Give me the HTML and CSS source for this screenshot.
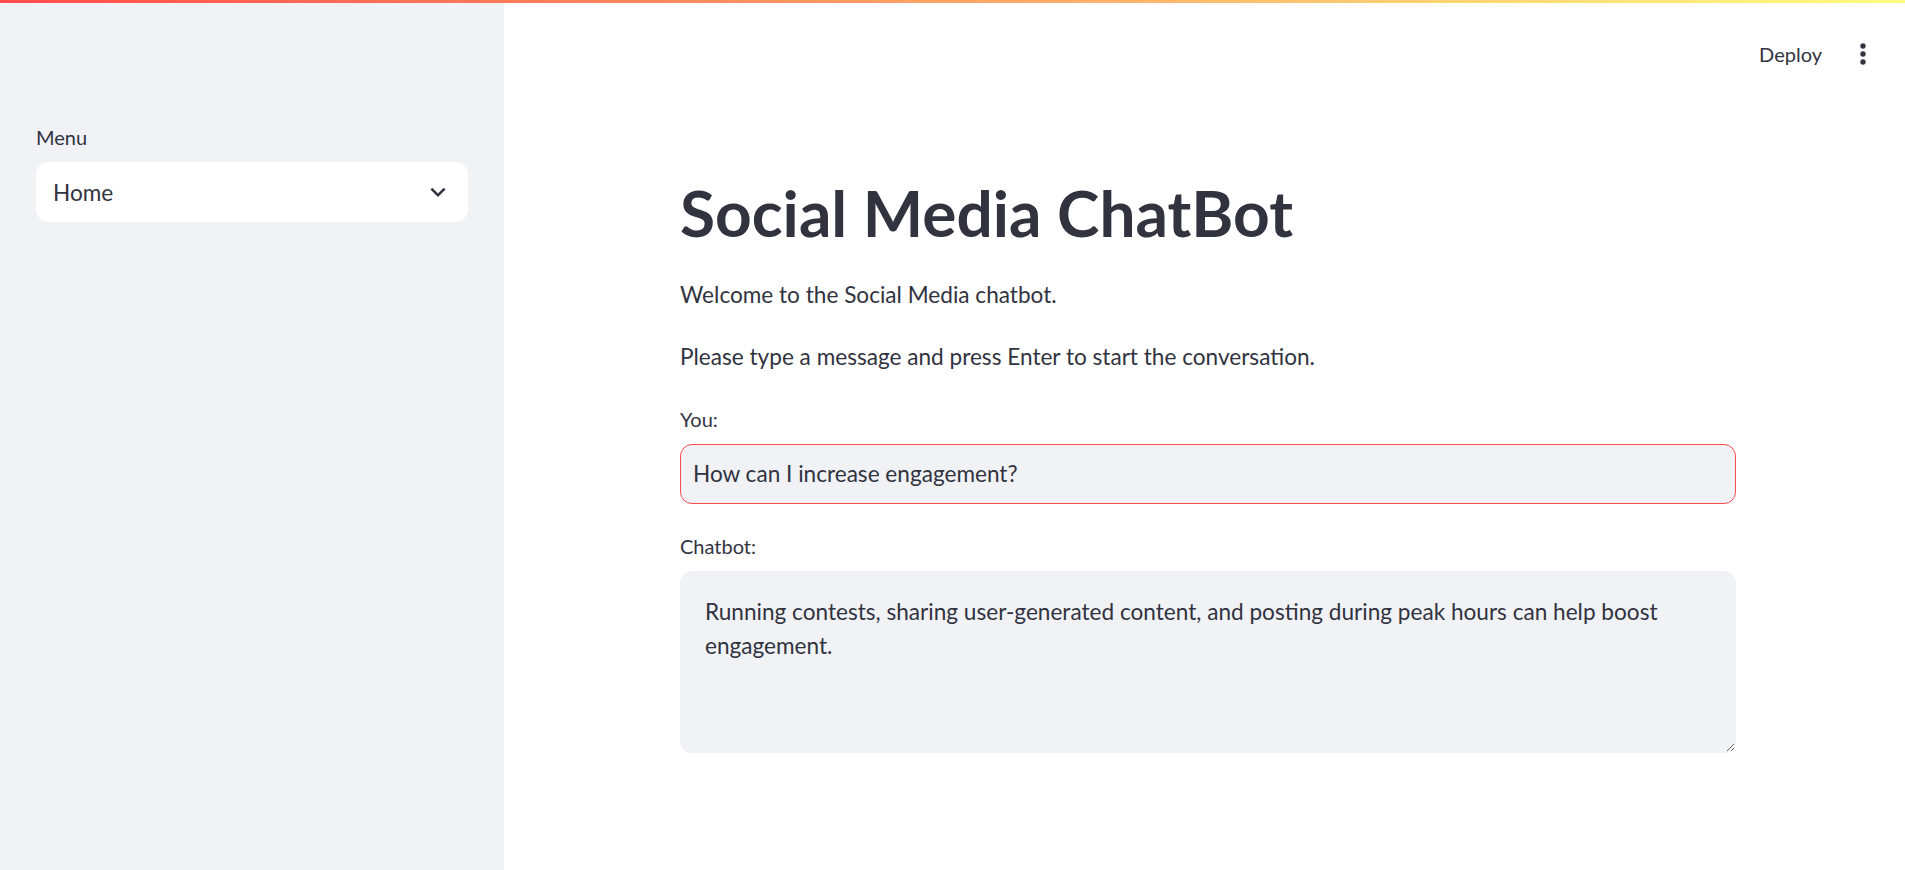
FILE: index.html
```html
<!DOCTYPE html>
<html lang="en">
<head>
<meta charset="utf-8">
<title>Social Media ChatBot</title>
<link rel="stylesheet" href="styles.css">
</head>
<body>
<div class="topbar"></div>
<div class="app">
  <aside class="sidebar">
    <div class="sb-content">
      <div class="widget">
        <label class="widget-label">Menu</label>
        <div class="select">
          <span class="select-value">Home</span>
          <svg class="chevron" width="30" height="30" viewBox="0 0 24 24" aria-hidden="true"><path d="M16.59 8.59L12 13.17 7.41 8.59 6 10l6 6 6-6z" fill="#31333F"/></svg>
        </div>
      </div>
    </div>
  </aside>
  <main class="main">
    <header class="header">
      <button class="deploy" type="button">Deploy</button>
      <button class="kebab" type="button" aria-label="Main menu">
        <svg width="32" height="32" viewBox="0 0 24 24" aria-hidden="true"><circle cx="12" cy="6" r="2" fill="#31333F"/><circle cx="12" cy="12" r="2" fill="#31333F"/><circle cx="12" cy="18" r="2" fill="#31333F"/></svg>
      </button>
    </header>
    <div class="block-wrap">
      <div class="block">
        <h1 class="title">Social Media ChatBot</h1>
        <p class="text">Welcome to the Social Media chatbot.</p>
        <p class="text">Please type a message and press Enter to start the conversation.</p>
        <div class="widget main-widget">
          <label class="widget-label" for="you">You:</label>
          <input id="you" class="text-input" type="text" value="How can I increase engagement?">
        </div>
        <div class="widget main-widget">
          <label class="widget-label" for="bot">Chatbot:</label>
          <textarea id="bot" class="text-area" readonly>Running contests, sharing user-generated content, and posting during peak hours can help boost engagement.</textarea>
        </div>
      </div>
    </div>
  </main>
</div>
</body>
</html>
```
FILE: styles.css
```css
html, body {
  margin: 0;
  padding: 0;
  height: 870px;
  overflow: hidden;
  background: #ffffff;
  font-family: "Source Sans Pro", Lato, "Noto Sans", sans-serif;
  color: #31333F;
}

.topbar {
  height: 3px;
  background: linear-gradient(90deg, #ff4b4b, #fffd80);
}

.app {
  display: flex;
  height: 867px;
}

.sidebar {
  width: 504px;
  flex: none;
  background: #f0f2f6;
  box-sizing: border-box;
  padding: 119px 36px 0 36px;
}

.widget {
  display: flex;
  flex-direction: column;
}

.widget-label {
  font-size: 20px;
  line-height: 30px;
  margin-bottom: 10px;
  color: #31333F;
}

.select {
  height: 60px;
  box-sizing: border-box;
  background: #ffffff;
  border: 1px solid #ffffff;
  border-radius: 12px;
  display: flex;
  align-items: center;
  justify-content: space-between;
  padding: 0 14px 0 16px;
}

.select-value {
  font-size: 22.6px;
  color: #31333F;
}

.chevron {
  display: block;
}

.main {
  flex: 1;
  display: flex;
  flex-direction: column;
  min-width: 0;
}

.header {
  height: 36px;
  margin-top: 33px;
  margin-right: 26px;
  display: flex;
  justify-content: flex-end;
  align-items: center;
  gap: 25px;
}

.deploy {
  font: inherit;
  font-size: 20px;
  line-height: 36px;
  color: #31333F;
  background: none;
  border: none;
  padding: 0;
}

.kebab {
  background: none;
  border: none;
  padding: 0;
  width: 32px;
  height: 32px;
  display: flex;
}

.block-wrap {
  display: flex;
  justify-content: center;
  padding-left: 7px;
  padding-top: 103px;
}

.block {
  width: 1056px;
  display: flex;
  flex-direction: column;
  gap: 24px;
}

.title {
  margin: 0;
  font-size: 64px;
  font-weight: 700;
  line-height: 1.2;
  color: #31333F;
}

.text {
  margin: 0;
  font-size: 22.6px;
  line-height: 38.4px;
}

.main-widget {
  margin-top: 3px;
}

.text-input {
  height: 60px;
  box-sizing: border-box;
  width: 100%;
  border: 1px solid #ff4b4b;
  border-radius: 12px;
  background: #f0f2f6;
  padding: 0 12px;
  font: inherit;
  font-size: 22.6px;
  color: #31333F;
  outline: none;
}

.text-area {
  height: 182px;
  box-sizing: border-box;
  width: 100%;
  border: 1px solid #f0f2f6;
  border-radius: 12px;
  background: #f0f2f6;
  padding: 23px 24px;
  font: inherit;
  font-size: 22.6px;
  line-height: 34px;
  color: #31333F;
  resize: vertical;
  outline: none;
}
```
